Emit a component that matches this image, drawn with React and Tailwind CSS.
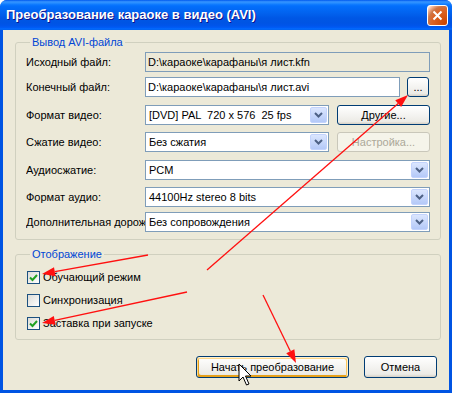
import React from 'react';

function Chevron() {
  return (
    <svg width="9" height="6" viewBox="0 0 9 6">
      <path d="M1 1 L4.5 4.5 L8 1" fill="none" stroke="#4D6185" strokeWidth="2" />
    </svg>
  );
}

function Select({ value, className = '' }) {
  return (
    <div className={`h-[20px] border border-[#7F9DB9] bg-white flex items-center p-[1px] ${className}`}>
      <span className="flex-1 pl-[2px] whitespace-pre overflow-hidden">{value}</span>
      <div className="w-[17px] h-full rounded-[2px] border border-[#C3D3FD] bg-[linear-gradient(to_bottom,#dbe6fe,#b4c9f8)] flex items-center justify-center">
        <Chevron />
      </div>
    </div>
  );
}

function TextBox({ value, readOnly, className = '' }) {
  return (
    <div className={`h-[20px] border border-[#7F9DB9] px-[2px] flex items-center whitespace-nowrap overflow-hidden ${readOnly ? 'bg-[#ECE9D8]' : 'bg-white'} ${className}`}>
      {value}
    </div>
  );
}

function Btn({ children, className = '', disabled, isDefault }) {
  if (disabled) {
    return (
      <div className={`flex items-center justify-center rounded-[3px] border border-[#C9C7BA] bg-[#F5F4EA] text-[#ACA899] ${className}`}>
        {children}
      </div>
    );
  }
  return (
    <div
      className={`flex items-center justify-center rounded-[3px] border border-[#003C74] bg-[linear-gradient(180deg,#fff_0%,#ecebe6_86%,#d6d0c5_100%)] ${
        isDefault ? 'shadow-[inset_-1px_1px_#fff0cf,inset_1px_2px_#fdd889,inset_-2px_2px_#fbc761,inset_2px_-2px_#e5a01a]' : ''
      } ${className}`}
    >
      {children}
    </div>
  );
}

function Row({ label, children, className = '' }) {
  return (
    <div className={`flex items-center h-[20px] ${className}`}>
      <div className="w-[119px] shrink-0 overflow-hidden whitespace-nowrap">{label}</div>
      {children}
    </div>
  );
}

function Check({ checked, label, className = '' }) {
  return (
    <div className={`flex items-center h-[13px] ${className}`}>
      <div className="w-[13px] h-[13px] ml-[1px] border border-[#1C5180] bg-[linear-gradient(135deg,#dcdcd7,#fff)] flex items-center justify-center">
        {checked && (
          <svg width="9" height="8" viewBox="0 0 9 8">
            <path d="M1 3.5 L3.5 6 L8 1" fill="none" stroke="#21A121" strokeWidth="2" />
          </svg>
        )}
      </div>
      <span className="ml-[3px] whitespace-nowrap">{label}</span>
    </div>
  );
}

function arrow(x1, y1, x2, y2) {
  const dx = x2 - x1;
  const dy = y2 - y1;
  const len = Math.sqrt(dx * dx + dy * dy);
  const ux = dx / len;
  const uy = dy / len;
  const hl = 13;
  const hw = 4.5;
  const bx = x2 - ux * hl;
  const by = y2 - uy * hl;
  const pts = `${x2},${y2} ${bx - uy * hw},${by + ux * hw} ${bx + uy * hw},${by - ux * hw}`;
  return { line: [x1, y1, bx, by], pts };
}

const arrows = [
  arrow(207, 270, 408, 95),
  arrow(148, 255, 42, 274),
  arrow(187, 292, 42, 323),
  arrow(263, 295, 296, 363),
];

export default function App() {
  return (
    <div className="relative w-[452px] h-[393px] flex flex-col rounded-t-[7px] overflow-hidden bg-[#0054E3] font-['Liberation_Sans',sans-serif] text-[11px] text-black">
      {/* title bar */}
      <div className="h-[30px] shrink-0 flex items-center bg-[linear-gradient(to_bottom,#0058ee_0%,#3593ff_6%,#288eff_10%,#127dff_14%,#036ffc_20%,#0262ee_44%,#0057e5_60%,#0054e3_76%,#0055eb_86%,#005bf5_92%,#026afe_96%,#0062ef_100%)]">
        <span className="ml-[6px] text-white font-bold text-[13px] [text-shadow:1px_1px_0_#0f1089]">
          Преобразование караоке в видео (AVI)
        </span>
        <div className="ml-auto mr-[4px] w-[21px] h-[21px] rounded-[3px] border border-white bg-[radial-gradient(circle_at_90%_90%,#cc4600_0%,#dc6527_55%,#cd7546_70%,#ffccb2_90%,#fff_100%)] flex items-center justify-center">
          <svg width="11" height="11" viewBox="0 0 11 11">
            <path d="M1.5 1.5 L9.5 9.5 M9.5 1.5 L1.5 9.5" stroke="#fff" strokeWidth="2" />
          </svg>
        </div>
      </div>

      {/* body */}
      <div className="flex-1 mx-[3px] mb-[3px] bg-[#ECE9D8] flex flex-col">
        <fieldset className="ml-[12px] mr-[8px] mt-[5px] border border-[#D0D0BF] rounded-[3px] px-[10px] pt-[3px] pb-[7px]">
          <legend className="ml-[4px] px-[2px] leading-[14px] text-[#0046D5]">Вывод AVI-файла</legend>
          <Row label="Исходный файл:">
            <TextBox readOnly value="D:\караоке\карафаны\я лист.kfn" className="flex-1" />
          </Row>
          <Row label="Конечный файл:" className="mt-[5px]">
            <TextBox value="D:\караоке\карафаны\я лист.avi" className="w-[255px]" />
            <Btn className="ml-[7px] w-[22px] h-[20px]">...</Btn>
          </Row>
          <Row label="Формат видео:" className="mt-[8px]">
            <Select value="[DVD] PAL  720 x 576  25 fps" className="w-[184px]" />
            <Btn className="ml-[8px] flex-1 h-[20px]">Другие...</Btn>
          </Row>
          <Row label="Сжатие видео:" className="mt-[7px]">
            <Select value="Без сжатия" className="w-[184px]" />
            <Btn disabled className="ml-[8px] flex-1 h-[20px]">Настройка...</Btn>
          </Row>
          <Row label="Аудиосжатие:" className="mt-[8px]">
            <Select value="PCM" className="flex-1" />
          </Row>
          <Row label="Формат аудио:" className="mt-[7px]">
            <Select value="44100Hz stereo 8 bits" className="flex-1" />
          </Row>
          <Row label="Дополнительная дорожка:" className="mt-[5px]">
            <Select value="Без сопровождения" className="flex-1" />
          </Row>
        </fieldset>

        <fieldset className="ml-[12px] mr-[8px] mt-[7px] border border-[#D0D0BF] rounded-[3px] px-[10px] pt-[10px] pb-[9px]">
          <legend className="ml-[4px] px-[2px] leading-[14px] text-[#0046D5]">Отображение</legend>
          <Check checked label="Обучающий режим" />
          <Check label="Синхронизация" className="mt-[10px]" />
          <Check checked label="Заставка при запуске" className="mt-[10px]" />
        </fieldset>

        <div className="flex justify-end gap-[15px] mr-[12px] mt-[16px]">
          <Btn isDefault className="w-[153px] h-[22px]">Начать преобразование</Btn>
          <Btn className="w-[73px] h-[22px]">Отмена</Btn>
        </div>
      </div>

      {/* annotation arrows and mouse pointer */}
      <svg className="absolute inset-0 pointer-events-none" width="452" height="393" viewBox="0 0 452 393">
        {arrows.map((a, i) => (
          <g key={i}>
            <line x1={a.line[0]} y1={a.line[1]} x2={a.line[2]} y2={a.line[3]} stroke="#FF1010" strokeWidth="1.3" />
            <polygon points={a.pts} fill="#FF1010" />
          </g>
        ))}
        <polygon
          points="239,364 239,381 243,377 246.5,385 249,384 245.5,376 251,376"
          fill="#fff"
          stroke="#000"
          strokeWidth="1"
          strokeLinejoin="miter"
        />
      </svg>
    </div>
  );
}
